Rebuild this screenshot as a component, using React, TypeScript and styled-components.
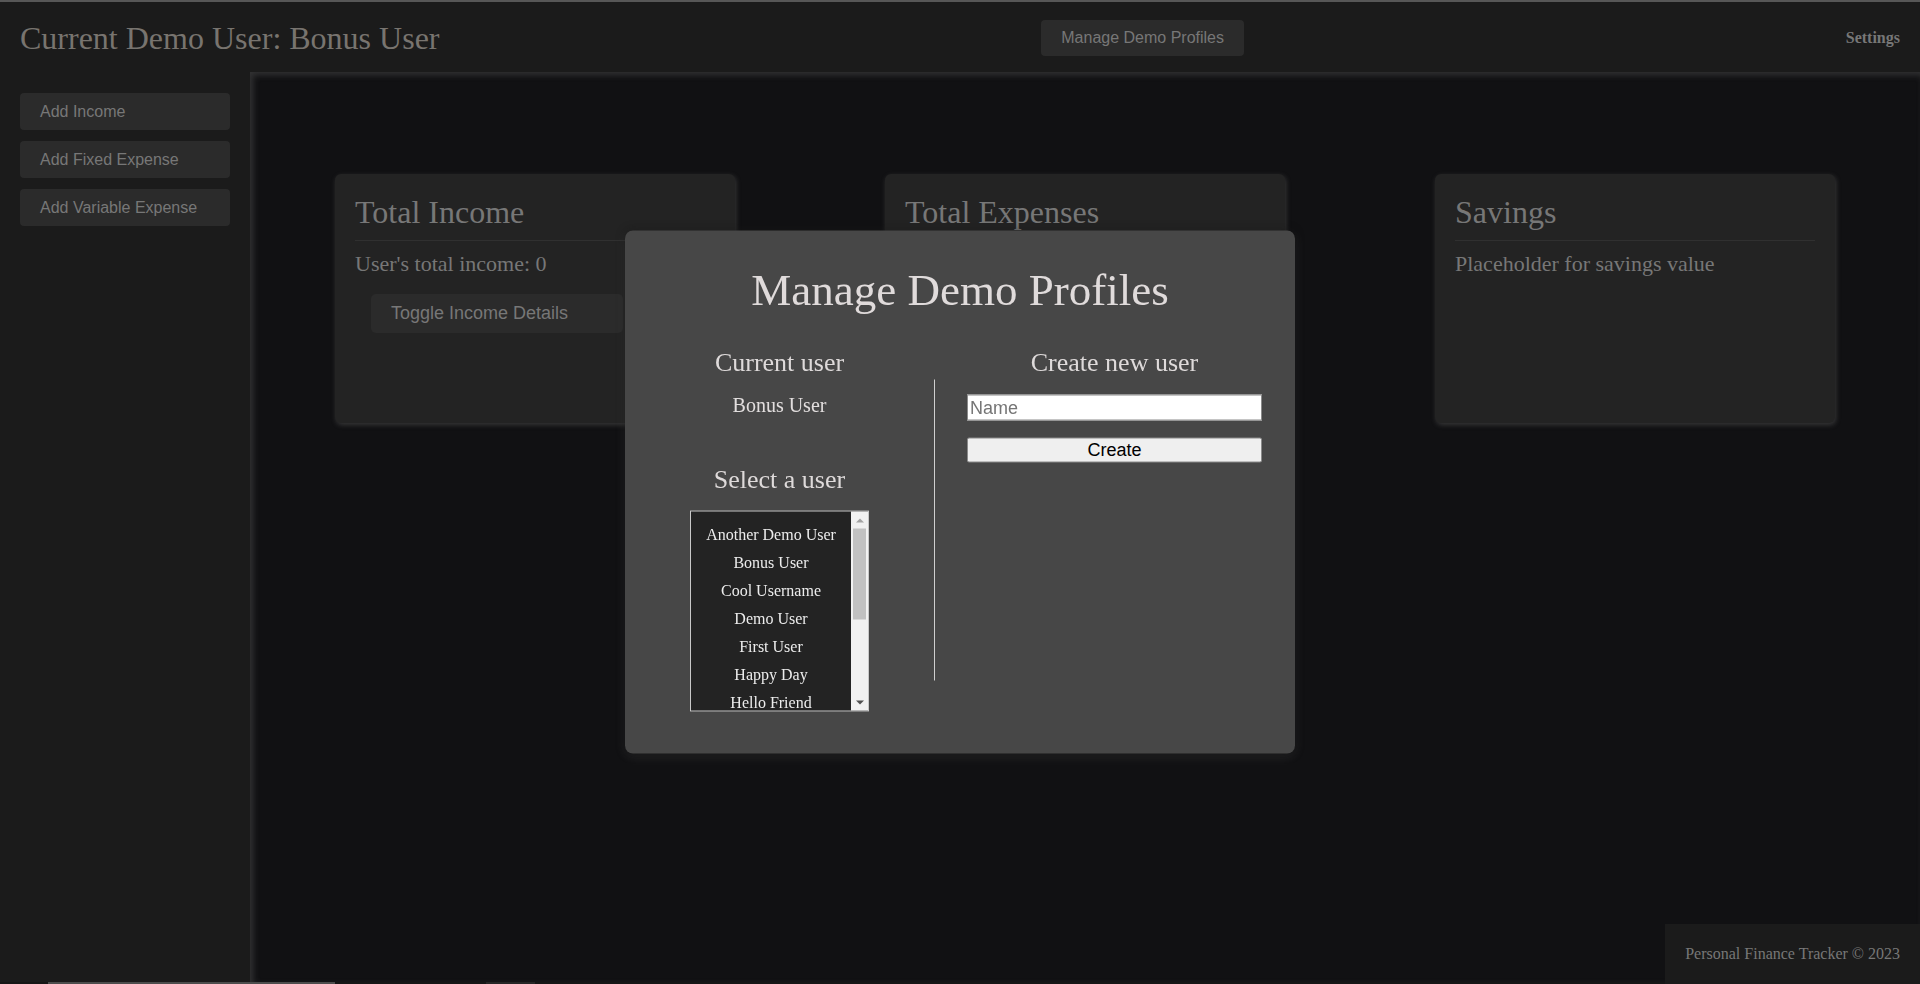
import React from "react";
import styled, { createGlobalStyle } from "styled-components";

const serif = `"Liberation Serif", "Times New Roman", serif`;
const sans = `"Liberation Sans", Arial, sans-serif`;

const GlobalStyle = createGlobalStyle`
  html, body {
    margin: 0;
    padding: 0;
    height: 100%;
    background: #111113;
    overflow: hidden;
  }
  #root { height: 100%; }
  *, *::before, *::after { box-sizing: border-box; }
`;

const Page = styled.div`
  height: 100vh;
  display: flex;
  flex-direction: column;
  font-family: ${serif};
`;

const Header = styled.header`
  flex: none;
  height: 72px;
  display: flex;
  align-items: center;
  justify-content: space-between;
  padding: 2px 20px 0;
  background: #1b1b1b;
  border-top: 2px solid #575757;
`;

const Title = styled.h1`
  margin: 0;
  font-size: 32px;
  font-weight: normal;
  line-height: 37px;
  color: #78746f;
`;

const HeaderButton = styled.button`
  font-family: ${sans};
  font-size: 16px;
  line-height: 18px;
  padding: 9px 20px;
  color: #777;
  background: #2b2b2b;
  border: none;
  border-radius: 4px;
`;

const SettingsLink = styled.span`
  font-family: ${serif};
  font-weight: bold;
  font-size: 16px;
  color: #777;
`;

const Body = styled.div`
  flex: 1;
  min-height: 0;
  display: flex;
`;

const Sidebar = styled.aside`
  flex: none;
  width: 250px;
  background: #1b1b1b;
  padding: 21px 20px;
  display: flex;
  flex-direction: column;
  gap: 11px;
`;

const SideButton = styled.button`
  font-family: ${sans};
  font-size: 16px;
  line-height: 19px;
  padding: 9px 20px;
  text-align: left;
  color: #777;
  background: #2b2b2b;
  border: none;
  border-radius: 4px;
`;

const Main = styled.main`
  flex: 1;
  background: #111113;
  box-shadow: inset 3px 3px 6px rgba(90, 90, 90, 0.45);
  padding-top: 102px;
  display: grid;
  grid-template-columns: repeat(3, 400px);
  justify-content: center;
  align-content: start;
  column-gap: 150px;
`;

const Card = styled.section`
  height: 249px;
  background: #232323;
  border-radius: 6px;
  padding: 20px;
  box-shadow: 1px 2px 5px rgba(110, 110, 110, 0.4);
`;

const CardTitle = styled.h2`
  margin: 0;
  font-size: 32px;
  font-weight: normal;
  line-height: 37px;
  color: #777;
  padding-bottom: 9px;
  border-bottom: 1px solid #303030;
`;

const CardText = styled.p`
  margin: 10px 0 0;
  font-size: 22px;
  line-height: 25px;
  color: #777;
`;

const ToggleButton = styled.button`
  display: block;
  margin: 18px 0 0 16px;
  width: 252px;
  padding: 10px 20px;
  font-family: ${sans};
  font-size: 18px;
  line-height: 19px;
  text-align: left;
  color: #777;
  background: #2b2b2b;
  border: none;
  border-radius: 5px;
`;

const BottomStrip = styled.div`
  flex: none;
  height: 2px;
  background: #161616;
  display: flex;
`;

const StripThumb = styled.span<{ $left: number; $width: number; $tone: string }>`
  margin-left: ${(p) => p.$left}px;
  width: ${(p) => p.$width}px;
  background: ${(p) => p.$tone};
`;

const Footer = styled.footer`
  position: fixed;
  right: 0;
  bottom: 0;
  background: #1b1b1b;
  padding: 20px;
  font-family: ${serif};
  font-size: 16px;
  line-height: 20px;
  color: #777;
`;

const Modal = styled.div`
  position: fixed;
  left: 50%;
  top: 50%;
  transform: translate(-50%, -50%);
  width: 670px;
  height: 523px;
  background: #474747;
  border-radius: 8px;
  padding-top: 33px;
  color: #dcd8d8;
  box-shadow: 0 0 10px rgba(0, 0, 0, 0.45), 0 3px 12px rgba(255, 255, 255, 0.1);
`;

const ModalTitle = styled.h2`
  margin: 0;
  font-size: 45px;
  font-weight: normal;
  line-height: 52px;
  text-align: center;
  color: #e0dbdb;
`;

const ModalBody = styled.div`
  margin-top: 32px;
  display: grid;
  grid-template-columns: 309px 1px 360px;
`;

const LeftCol = styled.div`
  display: flex;
  flex-direction: column;
  align-items: center;
`;

const RightCol = styled.div`
  display: flex;
  flex-direction: column;
  padding: 0 33px 0 32px;
`;

const ColHeading = styled.h3<{ $gap?: number }>`
  margin: ${(p) => p.$gap ?? 0}px 0 0;
  font-size: 26px;
  font-weight: normal;
  line-height: 30px;
  text-align: center;
  color: #dedada;
`;

const CurrentName = styled.div`
  margin-top: 16px;
  font-size: 20px;
  line-height: 23px;
  color: #e2dede;
`;

const Divider = styled.div`
  align-self: start;
  margin-top: 32px;
  height: 301px;
  background: #cfcfcf;
`;

const ListBox = styled.div`
  margin-top: 16px;
  width: 179px;
  height: 201px;
  border: 1px solid #c8c8c8;
  background: #232323;
  display: flex;
`;

const Options = styled.div`
  flex: 1;
  overflow: hidden;
  padding-top: 9px;
`;

const Option = styled.div`
  height: 28px;
  line-height: 28px;
  font-size: 16px;
  text-align: center;
  color: #ececec;
  white-space: nowrap;
`;

const ScrollTrack = styled.div`
  flex: none;
  width: 17px;
  background: #f1f1f1;
  display: flex;
  flex-direction: column;
  align-items: center;
`;

const ArrowBox = styled.div`
  flex: none;
  height: 17px;
  width: 17px;
  display: flex;
  align-items: center;
  justify-content: center;
`;

const ArrowUp = styled.span`
  width: 0;
  height: 0;
  border-left: 4px solid transparent;
  border-right: 4px solid transparent;
  border-bottom: 4px solid #a3a3a3;
`;

const ArrowDown = styled.span`
  width: 0;
  height: 0;
  border-left: 4px solid transparent;
  border-right: 4px solid transparent;
  border-top: 4px solid #505050;
`;

const Thumb = styled.div`
  flex: none;
  width: 13px;
  height: 91px;
  background: #c1c1c1;
`;

const TrackSpace = styled.div`
  flex: 1;
`;

const NameInput = styled.input`
  margin-top: 17px;
  height: 26px;
  width: 100%;
  padding: 1px 2px;
  font-family: ${sans};
  font-size: 18px;
  color: #000;
  background: #fff;
  border: 1px solid #8a8a8a;
  border-radius: 0;
  outline: none;
  &::placeholder { color: #757575; }
`;

const CreateButton = styled.button`
  margin-top: 17px;
  height: 25px;
  width: 100%;
  padding: 0;
  font-family: ${sans};
  font-size: 18px;
  line-height: 21px;
  color: #000;
  background: #efefef;
  border: 1px solid #8a8a8a;
  border-radius: 2px;
`;

const users = [
  "Another Demo User",
  "Bonus User",
  "Cool Username",
  "Demo User",
  "First User",
  "Happy Day",
  "Hello Friend",
];

export default function App() {
  return (
    <>
      <GlobalStyle />
      <Page>
        <Header>
          <Title>Current Demo User: Bonus User</Title>
          <HeaderButton>Manage Demo Profiles</HeaderButton>
          <SettingsLink>Settings</SettingsLink>
        </Header>
        <Body>
          <Sidebar>
            <SideButton>Add Income</SideButton>
            <SideButton>Add Fixed Expense</SideButton>
            <SideButton>Add Variable Expense</SideButton>
          </Sidebar>
          <Main>
            <Card>
              <CardTitle>Total Income</CardTitle>
              <CardText>User's total income: 0</CardText>
              <ToggleButton>Toggle Income Details</ToggleButton>
            </Card>
            <Card>
              <CardTitle>Total Expenses</CardTitle>
            </Card>
            <Card>
              <CardTitle>Savings</CardTitle>
              <CardText>Placeholder for savings value</CardText>
            </Card>
          </Main>
        </Body>
        <BottomStrip>
          <StripThumb $left={48} $width={287} $tone="#4d4d4d" />
          <StripThumb $left={151} $width={49} $tone="#262626" />
        </BottomStrip>
        <Footer>Personal Finance Tracker © 2023</Footer>
        <Modal>
          <ModalTitle>Manage Demo Profiles</ModalTitle>
          <ModalBody>
            <LeftCol>
              <ColHeading>Current user</ColHeading>
              <CurrentName>Bonus User</CurrentName>
              <ColHeading $gap={48}>Select a user</ColHeading>
              <ListBox>
                <Options>
                  {users.map((u) => (
                    <Option key={u}>{u}</Option>
                  ))}
                </Options>
                <ScrollTrack>
                  <ArrowBox>
                    <ArrowUp />
                  </ArrowBox>
                  <Thumb />
                  <TrackSpace />
                  <ArrowBox>
                    <ArrowDown />
                  </ArrowBox>
                </ScrollTrack>
              </ListBox>
            </LeftCol>
            <Divider />
            <RightCol>
              <ColHeading>Create new user</ColHeading>
              <NameInput placeholder="Name" />
              <CreateButton>Create</CreateButton>
            </RightCol>
          </ModalBody>
        </Modal>
      </Page>
    </>
  );
}
